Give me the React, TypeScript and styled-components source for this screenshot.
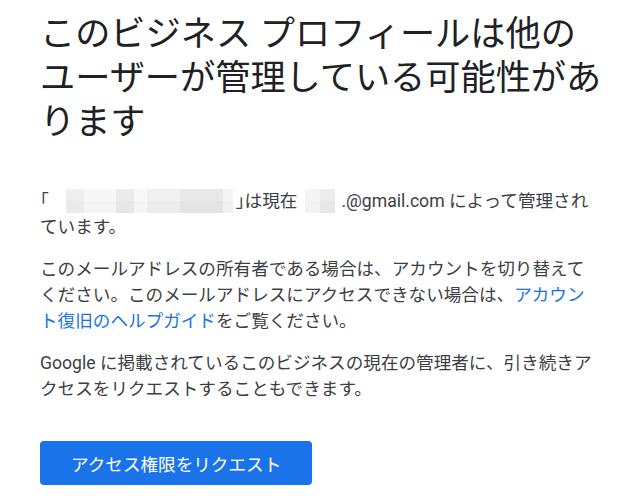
import React from 'react';
import styled, { createGlobalStyle } from 'styled-components';

const GlobalStyle = createGlobalStyle`
  html, body {
    margin: 0;
    padding: 0;
    background: #fff;
  }
  body {
    font-family: Roboto, 'Noto Sans CJK JP', sans-serif;
    text-spacing-trim: space-all;
  }
`;

const Page = styled.main`
  width: 568px;
  padding: 12px 36px 0 40px;
`;

const Title = styled.h1`
  margin: 0;
  font-family: Roboto, 'Noto Sans CJK JP', sans-serif;
  font-size: 35.2px;
  line-height: 44px;
  font-weight: 400;
  color: #202124;
`;

const Body = styled.div`
  max-width: 560px;
  margin-top: 44px;
  display: flex;
  flex-direction: column;
  gap: 16px;
`;

const Para = styled.p`
  margin: 0;
  font-size: 17.6px;
  line-height: 26px;
  color: #3c4043;
`;

const Link = styled.a`
  color: #1a73e8;
  text-decoration: none;
`;

// half-width corner bracket via the font's halt feature
const Bracket = styled.span<{ $gap?: number }>`
  font-feature-settings: 'halt';
  margin-left: ${(p) => p.$gap ?? 0}px;
`;

const Redacted = styled.span<{ $before?: number; $after?: number }>`
  display: inline-flex;
  vertical-align: top;
  height: 24px;
  margin: 1px ${(p) => p.$after ?? 0}px 0 ${(p) => p.$before ?? 0}px;
`;

const Cell = styled.span<{ $w: number; $top: string; $bottom: string }>`
  display: flex;
  flex-direction: column;
  width: ${(p) => p.$w}px;

  &::before,
  &::after {
    content: '';
    flex: 1;
  }
  &::before {
    background: ${(p) => p.$top};
  }
  &::after {
    background: ${(p) => p.$bottom};
  }
`;

const Actions = styled.div`
  margin-top: 39px;
`;

const Button = styled.button`
  height: 44px;
  padding: 0 31px;
  border: none;
  border-radius: 4px;
  background: #1a73e8;
  color: #fff;
  font-family: Roboto, 'Noto Sans CJK JP', sans-serif;
  font-size: 17.6px;
  font-weight: 400;
  cursor: pointer;
`;

const nameCells = [
  { w: 18, top: '#efefef', bottom: '#eaeaea' },
  { w: 32, top: '#f7f7f7', bottom: '#f4f4f4' },
  { w: 18, top: '#ebebeb', bottom: '#e6e6e6' },
  { w: 13, top: '#f8f8f8', bottom: '#f5f5f5' },
  { w: 33, top: '#f0f0f0', bottom: '#ececec' },
  { w: 43, top: '#e9e9e9', bottom: '#e4e4e4' },
  { w: 10, top: '#f4f4f4', bottom: '#f0f0f0' },
];

const mailCells = [
  { w: 15, top: '#f5f5f5', bottom: '#f2f2f2' },
  { w: 15, top: '#ececec', bottom: '#e7e7e7' },
];

export default function App() {
  return (
    <Page>
      <GlobalStyle />
      <Title>このビジネス プロフィールは他のユーザーが管理している可能性があります</Title>
      <Body>
        <Para>
          <Bracket>「</Bracket>
          <Redacted $before={17}>
            {nameCells.map((c, i) => (
              <Cell key={i} $w={c.w} $top={c.top} $bottom={c.bottom} />
            ))}
          </Redacted>
          <Bracket $gap={3}>」</Bracket>
          は現在
          <Redacted $before={8} $after={6}>
            {mailCells.map((c, i) => (
              <Cell key={i} $w={c.w} $top={c.top} $bottom={c.bottom} />
            ))}
          </Redacted>
          .@gmail.com によって管理されています。
        </Para>
        <Para>
          このメールアドレスの所有者である場合は、アカウントを切り替えてください。このメールアドレスにアクセスできない場合は、
          <Link href="#">アカウント復旧のヘルプガイド</Link>をご覧ください。
        </Para>
        <Para>
          Google に掲載されているこのビジネスの現在の管理者に、引き続きアクセスをリクエストすることもできます。
        </Para>
      </Body>
      <Actions>
        <Button>アクセス権限をリクエスト</Button>
      </Actions>
    </Page>
  );
}
